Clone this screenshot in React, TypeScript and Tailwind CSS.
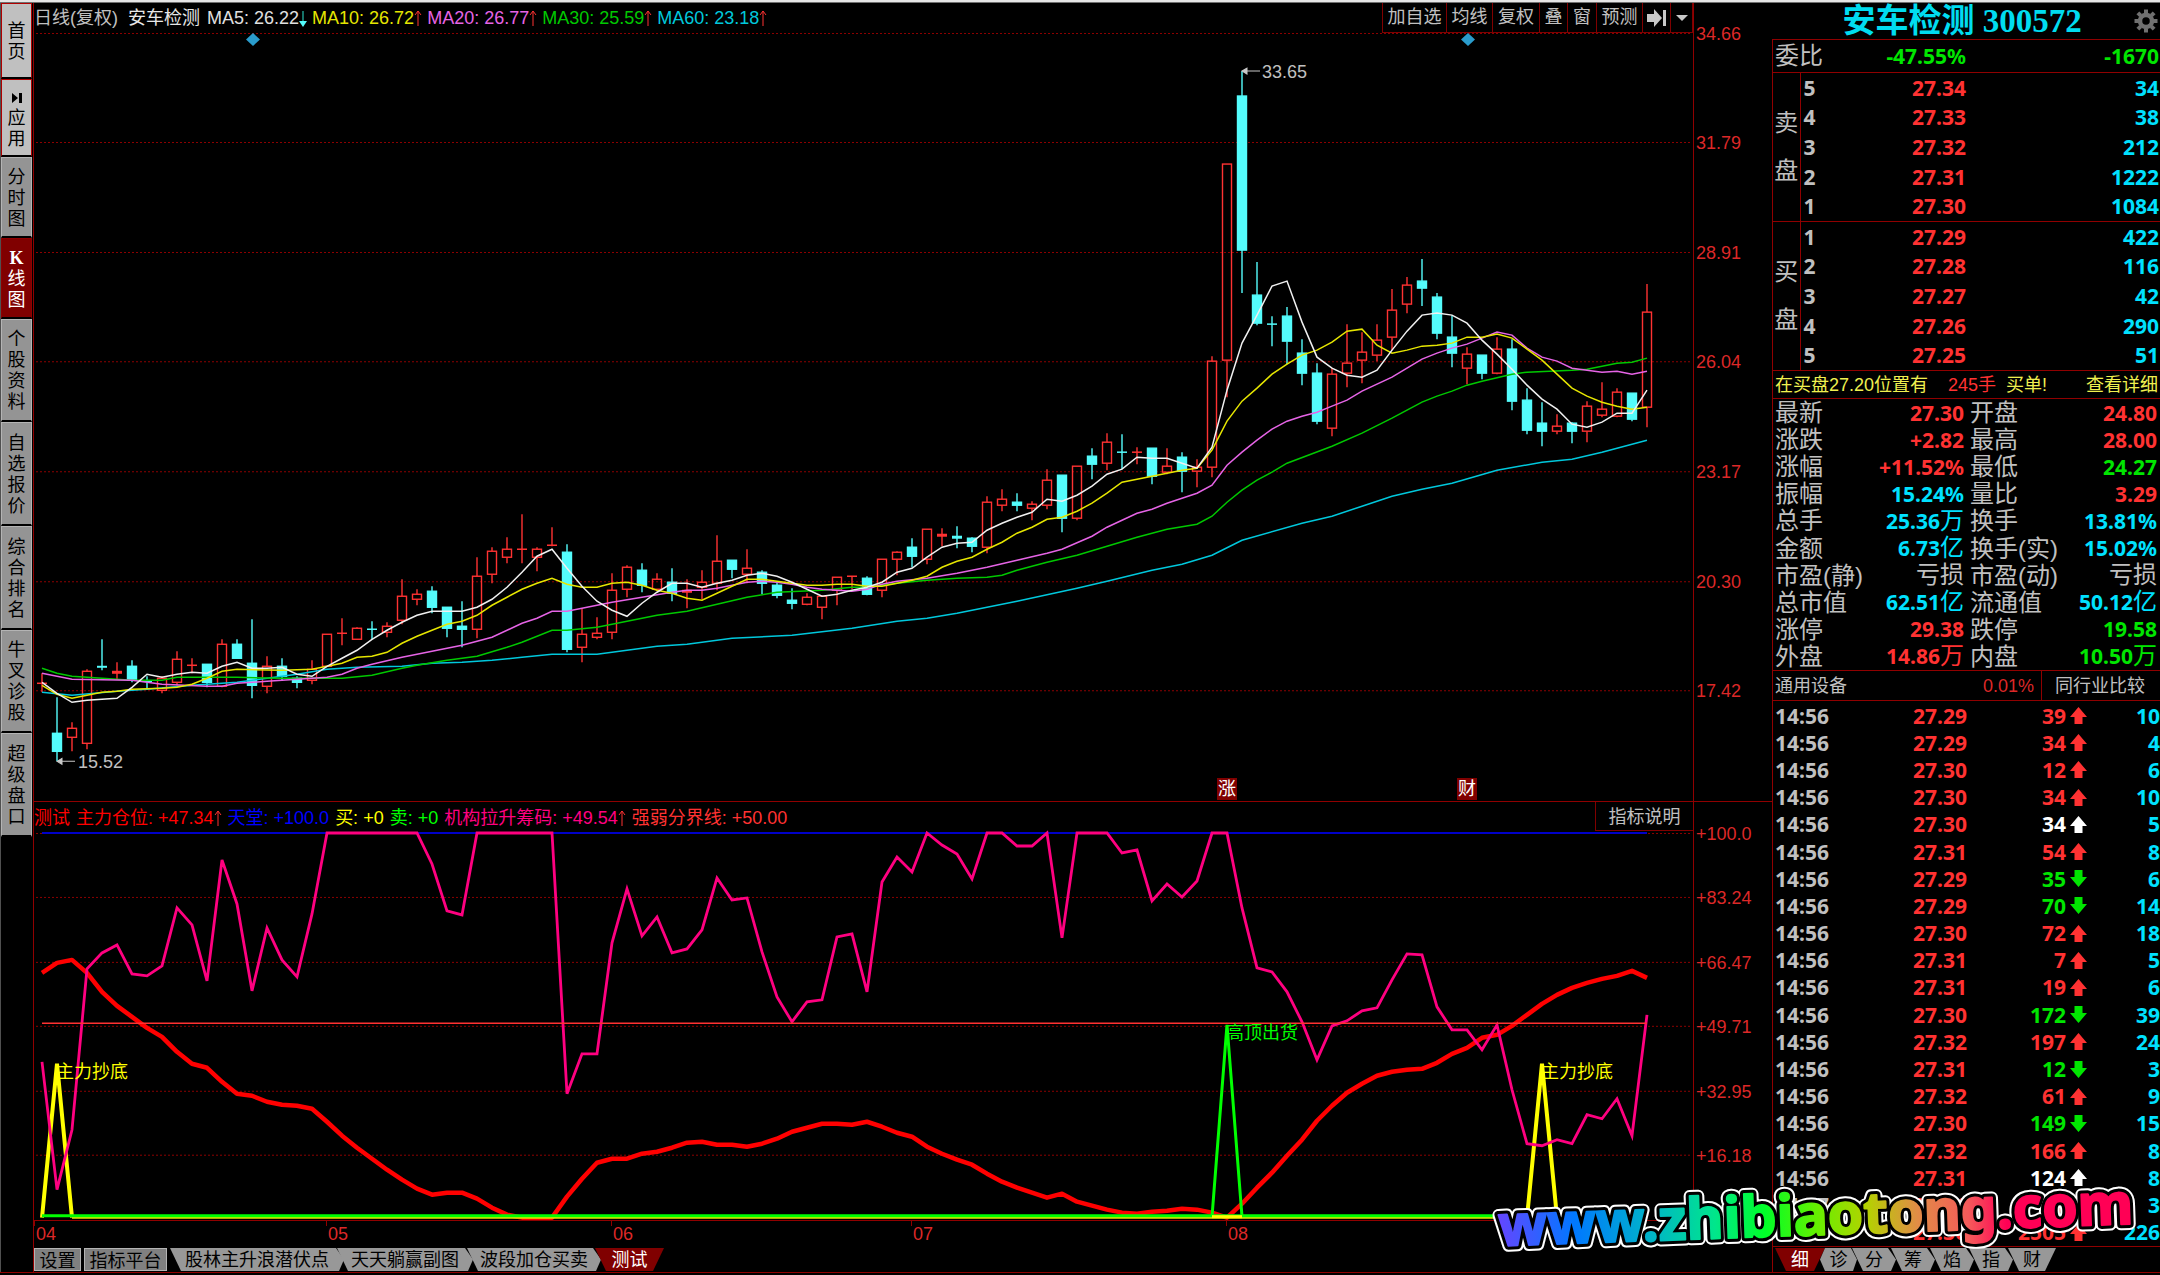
import React from 'react';

const X0 = 42;
const STEP = 15;
const cx = (i: number) => X0 + STEP * i;

type Kind = 'r' | 'c';
type Candle = [Kind, number, number, number, number];

// kind, high, body top, body bottom, low
const candles: Candle[] = [
  ['r', 673, 683, 683, 692], ['c', 697, 733, 751, 761], ['r', 722, 728, 737, 751], ['r', 669, 671, 743, 749],
  ['c', 639, 666, 667, 670], ['r', 662, 671, 673, 679], ['c', 660, 666, 680, 682], ['c', 676, 681, 681, 688],
  ['r', 676, 678, 690, 693], ['r', 651, 659, 682, 685], ['r', 658, 665, 665, 673], ['c', 664, 664, 682, 687],
  ['r', 639, 644, 686, 687], ['c', 639, 644, 658, 658], ['c', 619, 663, 685, 698], ['r', 656, 666, 686, 693],
  ['c', 658, 666, 676, 680], ['c', 676, 678, 682, 688], ['r', 660, 669, 680, 684], ['r', 634, 634, 666, 666],
  ['r', 618, 633, 633, 645], ['r', 627, 628, 639, 639], ['c', 621, 629, 629, 639], ['r', 622, 626, 632, 637],
  ['r', 579, 596, 620, 624], ['r', 589, 594, 599, 605], ['c', 586, 591, 607, 613], ['c', 607, 607, 628, 637],
  ['c', 601, 626, 629, 647], ['r', 557, 576, 629, 638], ['r', 547, 551, 574, 583], ['r', 537, 549, 557, 563],
  ['r', 514, 549, 549, 563], ['r', 547, 549, 557, 571], ['r', 527, 545, 545, 546], ['c', 544, 552, 649, 652],
  ['r', 608, 634, 647, 662], ['r', 617, 633, 637, 639], ['r', 573, 590, 632, 639], ['r', 565, 567, 589, 597],
  ['c', 563, 570, 585, 592], ['r', 573, 579, 589, 591], ['c', 568, 582, 593, 601], ['r', 579, 590, 592, 608],
  ['r', 570, 582, 587, 599], ['r', 535, 561, 583, 590], ['c', 560, 560, 569, 578], ['r', 549, 568, 574, 583],
  ['c', 570, 572, 583, 594], ['c', 582, 585, 595, 598], ['c', 588, 600, 603, 609], ['r', 593, 597, 604, 605],
  ['r', 595, 596, 607, 619], ['r', 577, 577, 590, 605], ['r', 576, 576, 576, 589], ['c', 576, 578, 594, 595],
  ['r', 559, 559, 590, 597], ['r', 551, 552, 559, 575], ['c', 538, 547, 556, 567], ['r', 529, 529, 559, 564],
  ['r', 528, 534, 536, 546], ['c', 526, 536, 538, 548], ['c', 537, 538, 546, 552], ['r', 496, 502, 547, 553],
  ['r', 489, 499, 505, 511], ['c', 493, 502, 505, 511], ['r', 501, 504, 508, 520], ['r', 469, 480, 505, 509],
  ['c', 475, 475, 518, 532], ['r', 466, 466, 518, 520], ['c', 448, 456, 464, 479], ['r', 433, 442, 463, 470],
  ['c', 434, 452, 452, 469], ['r', 447, 452, 452, 464], ['c', 448, 448, 476, 484], ['r', 448, 466, 472, 474],
  ['c', 452, 457, 471, 492], ['r', 459, 467, 471, 487], ['r', 356, 361, 467, 477], ['r', 164, 164, 360, 397],
  ['c', 71, 96, 250, 293], ['c', 262, 295, 323, 325], ['c', 316, 324, 324, 346], ['c', 307, 316, 341, 364],
  ['c', 339, 353, 373, 385], ['c', 363, 373, 421, 424], ['r', 368, 374, 428, 436], ['r', 324, 363, 373, 387],
  ['r', 332, 352, 360, 383], ['r', 324, 340, 355, 361], ['r', 289, 310, 337, 350], ['r', 277, 285, 304, 313],
  ['c', 259, 281, 288, 306], ['c', 293, 297, 333, 339], ['c', 315, 337, 353, 367], ['r', 347, 354, 368, 384],
  ['c', 355, 355, 373, 379], ['r', 337, 349, 373, 374], ['c', 339, 349, 401, 410], ['c', 388, 400, 430, 434],
  ['c', 402, 423, 431, 446], ['r', 414, 426, 431, 434], ['c', 422, 423, 431, 443], ['r', 401, 406, 431, 442],
  ['r', 382, 409, 415, 417], ['r', 388, 392, 416, 417], ['c', 393, 393, 419, 421], ['r', 284, 312, 407, 427],
];

type Pt = [number, number];
const path = (pts: Pt[]) => pts.map(([i, y]) => `${cx(i)},${y}`).join(' ');
const dense = (ys: number[]): Pt[] => ys.map((y, i) => [i, y]);

const ma5 = dense([
  682, 693, 702, 700, 699, 698, 687, 674, 677, 674, 672, 673, 666, 662, 668, 668, 667, 674, 676, 666, 658, 650, 639, 630,
  622, 615, 611, 611, 611, 607, 599, 587, 572, 556, 549, 568, 586, 601, 610, 616, 603, 592, 583, 583, 587, 583, 580, 575,
  573, 576, 582, 589, 596, 594, 590, 587, 582, 572, 568, 557, 547, 543, 542, 530, 523, 517, 512, 499, 501, 495, 486, 474,
  469, 457, 458, 458, 463, 468, 447, 390, 343, 315, 286, 281, 322, 357, 368, 375, 377, 370, 350, 331, 315, 313, 315, 323,
  340, 354, 369, 385, 399, 409, 424, 427, 422, 413, 413, 390,
]);
const ma10: Pt[] = [
  [0, 685], [1, 694], [2, 698], [3, 695], [4, 692], [5, 691], [6, 689], [8, 688], [9, 687], [10, 684], [11, 678], [12, 671],
  [13, 669], [16, 670], [18, 669], [19, 666], [20, 663], [21, 657], [22, 656], [23, 652], [24, 643], [25, 636], [26, 630],
  [27, 624], [28, 621], [29, 615], [30, 605], [31, 597], [32, 589], [33, 583], [34, 578], [35, 584], [36, 587], [37, 587],
  [38, 583], [39, 582], [40, 585], [41, 590], [42, 593], [43, 598], [44, 600], [45, 593], [46, 586], [47, 579], [48, 579],
  [49, 581], [50, 583], [51, 585], [52, 585], [53, 584], [54, 584], [55, 586], [56, 586], [57, 583], [58, 580], [59, 576],
  [60, 567], [61, 561], [62, 557], [63, 549], [64, 542], [65, 533], [66, 527], [67, 519], [68, 517], [69, 511], [70, 503],
  [71, 493], [72, 482], [73, 479], [74, 476], [75, 473], [76, 470], [77, 468], [78, 450], [79, 421], [80, 401], [81, 388],
  [82, 374], [83, 364], [84, 355], [85, 350], [86, 342], [87, 331], [88, 329], [89, 345], [90, 353], [91, 350], [92, 346],
  [93, 345], [94, 343], [95, 337], [96, 337], [97, 334], [98, 338], [99, 349], [100, 360], [101, 374], [102, 388],
  [103, 396], [104, 402], [105, 406], [106, 409], [107, 407],
];
const ma20: Pt[] = [
  [0, 673], [2, 679], [6, 680], [8, 684], [11, 686], [12, 686], [13, 683], [15, 681], [17, 679], [19, 677], [20, 674],
  [21, 668], [22, 664], [24, 657], [26, 651], [28, 645], [30, 637], [32, 623], [33, 618], [34, 611], [35, 611], [36, 608],
  [38, 602], [40, 597], [42, 592], [43, 590], [44, 590], [45, 588], [46, 585], [47, 582], [48, 581], [49, 582], [50, 584],
  [51, 587], [52, 589], [53, 590], [54, 591], [55, 589], [56, 584], [57, 581], [59, 578], [61, 573], [63, 567], [65, 560],
  [67, 553], [68, 549], [70, 536], [71, 527], [73, 513], [74, 509], [75, 503], [76, 498], [77, 493], [78, 485], [79, 465],
  [80, 452], [81, 440], [82, 429], [83, 421], [84, 416], [85, 412], [86, 406], [87, 400], [88, 391], [90, 377], [91, 368],
  [92, 359], [93, 353], [94, 348], [95, 344], [96, 338], [97, 332], [98, 335], [99, 348], [100, 357], [101, 361],
  [102, 368], [103, 370], [104, 372], [105, 371], [106, 374], [107, 371],
];
const ma30: Pt[] = [
  [0, 668], [1, 673], [2, 676], [4, 678], [6, 680], [8, 680], [9, 677], [13, 677], [16, 678], [20, 678], [22, 675],
  [24, 668], [25, 665], [27, 660], [29, 656], [31, 647], [32, 642], [34, 630], [35, 630], [37, 627], [39, 621], [41, 615],
  [43, 611], [45, 604], [47, 597], [49, 592], [52, 590], [54, 587], [55, 587], [57, 583], [59, 580], [61, 578], [63, 577],
  [64, 575], [65, 570], [67, 562], [69, 555], [71, 546], [73, 537], [75, 529], [77, 524], [78, 516], [79, 502], [80, 490],
  [81, 480], [82, 472], [83, 463], [86, 446], [88, 433], [90, 418], [91, 410], [92, 402], [93, 396], [94, 391], [95, 385],
  [96, 381], [98, 374], [99, 372], [102, 370], [103, 369], [104, 366], [105, 363], [106, 362], [107, 358],
];
const ma60: Pt[] = [
  [0, 692], [2, 695], [5, 691], [7, 689], [10, 685], [13, 682], [15, 678], [17, 674], [19, 669], [21, 667], [24, 666],
  [26, 663], [28, 662], [30, 660], [32, 657], [34, 654], [37, 654], [39, 650], [41, 646], [43, 644], [46, 638], [50, 635],
  [54, 628], [57, 621], [59, 618], [61, 613], [65, 601], [69, 588], [71, 581], [74, 570], [76, 564], [78, 555], [80, 540],
  [84, 523], [86, 516], [88, 506], [90, 496], [92, 489], [94, 483], [97, 470], [100, 462], [102, 459], [104, 452], [107, 440],
];

const chips: Pt[] = [
  [0, 1062], [1, 1190], [2, 1130], [3, 969], [4, 953], [5, 945], [6, 974], [7, 976], [8, 966], [9, 908], [10, 925],
  [11, 981], [12, 860], [13, 904], [14, 991], [15, 928], [16, 960], [17, 977], [18, 914], [19, 833], [25, 833], [26, 864],
  [27, 911], [28, 915], [29, 833], [34, 833], [35, 1094], [36, 1054], [37, 1054], [38, 943], [39, 889], [40, 936],
  [41, 917], [42, 953], [43, 949], [44, 930], [45, 878], [46, 900], [47, 898], [48, 952], [49, 997], [50, 1022],
  [51, 1002], [52, 1000], [53, 937], [54, 934], [55, 992], [56, 882], [57, 857], [58, 872], [59, 833], [60, 845],
  [61, 854], [62, 879], [63, 833], [64, 833], [65, 846], [66, 846], [67, 833], [68, 938], [69, 833], [71, 833], [72, 853],
  [73, 850], [74, 901], [75, 884], [76, 897], [77, 881], [78, 833], [79, 833], [80, 908], [81, 968], [82, 972], [83, 992],
  [84, 1022], [85, 1060], [86, 1026], [87, 1021], [88, 1011], [89, 1008], [90, 980], [91, 954], [92, 955], [93, 1007],
  [94, 1030], [95, 1030], [96, 1050], [97, 1025], [98, 1090], [99, 1144], [100, 1146], [101, 1140], [102, 1144],
  [103, 1115], [104, 1119], [105, 1099], [106, 1136], [107, 1015],
];
const position = dense([
  973, 963, 960, 973, 992, 1006, 1017, 1028, 1037, 1052, 1064, 1068, 1082, 1094, 1096, 1102, 1105, 1106, 1109, 1122, 1136,
  1148, 1159, 1170, 1180, 1189, 1195, 1193, 1193, 1199, 1208, 1215, 1218, 1218, 1218, 1197, 1179, 1163, 1159, 1159, 1154,
  1152, 1148, 1143, 1142, 1145, 1145, 1147, 1144, 1139, 1132, 1128, 1124, 1124, 1125, 1122, 1127, 1133, 1137, 1147, 1154,
  1160, 1165, 1174, 1182, 1188, 1193, 1198, 1194, 1202, 1206, 1210, 1213, 1214, 1212, 1211, 1209, 1210, 1213, 1218, 1204,
  1188, 1173, 1156, 1140, 1121, 1106, 1093, 1084, 1076, 1072, 1070, 1069, 1063, 1054, 1048, 1038, 1035, 1026, 1015, 1004,
  995, 988, 983, 979, 976, 971, 978,
]);

const F = '[font-family:"Liberation_Sans","Noto_Sans_CJK_SC",sans-serif]';
const NUM = '[font-family:"Noto_Sans","Noto_Sans_CJK_SC",sans-serif] font-bold text-[21px]';
const RED = 'text-[#ff3232]';
const GREEN = 'text-[#00e600]';
const CYAN = 'text-[#00e1ff]';
const GREY = 'text-[#c0c0c0]';
const MUTED_RED = 'text-[#dc2828]';

const sideTabs: { label: string; cls: string }[] = [
  { label: '首页', cls: 'h-[76px] bg-[#c0c0c0] text-black border-[#b00000]' },
  { label: '>应用', cls: 'h-[78px] bg-[#c0c0c0] text-black border-[#b00000]' },
  { label: '分时图', cls: 'h-[81px] bg-[#949494] text-black border-[#b4b4b4]' },
  { label: 'K线图', cls: 'h-[81px] bg-[#800000] text-white border-[#900000]' },
  { label: '个股资料', cls: 'h-[103px] bg-[#949494] text-black border-[#b4b4b4]' },
  { label: '自选报价', cls: 'h-[104px] bg-[#949494] text-black border-[#b4b4b4]' },
  { label: '综合排名', cls: 'h-[104px] bg-[#949494] text-black border-[#b4b4b4]' },
  { label: '牛叉诊股', cls: 'h-[103px] bg-[#949494] text-black border-[#b4b4b4]' },
  { label: '超级盘口', cls: 'h-[104px] bg-[#949494] text-black border-[#b4b4b4]' },
];

function SideNav() {
  return (
    <nav className="flex w-[33px] shrink-0 flex-col border-l border-[#505050] bg-black pr-px">
      {sideTabs.map((t) => (
        <div key={t.label} className="border-b-2 border-black">
          <button
            type="button"
            className={`-mb-0.5 box-border flex w-full flex-col items-center justify-center border border-b-2 border-b-black pt-0.5 text-[18px] leading-[21px] ${t.cls}`}
          >
            {t.label.split('').map((ch, i) =>
              ch === '>' ? (
                <svg key={i} viewBox="0 0 12 12" className="my-1 h-3 w-3" fill="#000">
                  <path d="M1 1 L7 6 L1 11 Z M8 1 H11 V11 H8 Z" />
                </svg>
              ) : ch === 'K' ? (
                <span key={i} className='[font-family:"Liberation_Serif",serif] font-bold'>K</span>
              ) : (
                <span key={i}>{ch}</span>
              ),
            )}
          </button>
        </div>
      ))}
    </nav>
  );
}

function ThinArrow({ down = false, color }: { down?: boolean; color: string }) {
  return (
    <svg viewBox="0 0 8 18" className="h-[18px] w-2 shrink-0" fill="none" stroke={color}>
      {down ? (
        <>
          <path d="M4 2 V14" stroke="#1e9a8c" strokeWidth="1.500" />
          <path d="M0 12 H8 L4 18 Z" fill={color} stroke="none" />
        </>
      ) : (
        <path d="M4 17 V2 M1 6 L4 2 L7 6" />
      )}
    </svg>
  );
}

const maItems = [
  { t: 'MA5: 26.22', c: 'text-[#e0e0e0]', down: true },
  { t: 'MA10: 26.72', c: 'text-[#e6e600]' },
  { t: 'MA20: 26.77', c: 'text-[#e664e6]' },
  { t: 'MA30: 25.59', c: 'text-[#00c800]' },
  { t: 'MA60: 23.18', c: 'text-[#00c8dc]' },
];

function ToolBar() {
  const b = 'h-full border-l border-[#800000] flex items-center justify-center';
  return (
    <div className={`flex h-[30px] shrink-0 border-b border-r border-[#800000] text-[18px] ${GREY}`}>
      <button type="button" className={`${b} w-[64px]`}>加自选</button>
      <button type="button" className={`${b} w-[46px]`}>均线</button>
      <button type="button" className={`${b} w-[47px]`}>复权</button>
      <button type="button" className={`${b} w-[28px]`}>叠</button>
      <button type="button" className={`${b} w-[29px]`}>窗</button>
      <button type="button" className={`${b} w-[46px]`}>预测</button>
      <button type="button" aria-label="下一只" className={`${b} w-[28px]`}>
        <svg viewBox="0 0 19 18" className="h-[18px] w-[19px]" fill="#c8c8c8">
          <path d="M0 5 H7 V0 L15 9 L7 18 V13 H0 Z M16 1 H19 V17 H16 Z" />
        </svg>
      </button>
      <button type="button" aria-label="更多" className={`${b} w-[22px]`}>
        <svg viewBox="0 0 12 6" className="h-1.5 w-3" fill="#c8c8c8"><path d="M0 0 H12 L6 6 Z" /></svg>
      </button>
    </div>
  );
}

type Box = { x: number; y: number; w: number; h: number };
const priceBox: Box = { x: 34, y: 33, w: 1659, h: 768 };
const indBox: Box = { x: 34, y: 832, w: 1659, h: 388 };

function at(box: Box, x: number, y: number): React.CSSProperties {
  return { left: `${((x - box.x) / box.w) * 100}%`, top: `${((y - box.y) / box.h) * 100}%` };
}

function Grid({ ys }: { ys: number[] }) {
  return (
    <g stroke="#8c0000" strokeWidth="1" strokeDasharray="2 2">
      {ys.map((y) => <line key={y} x1="36" x2="1692" y1={y + 0.5} y2={y + 0.5} />)}
    </g>
  );
}

const priceGrid = [33, 142, 252, 361, 471, 581, 690];
const priceLabels = ['34.66', '31.79', '28.91', '26.04', '23.17', '20.30', '17.42'];

function Axis({ box, ys, labels }: { box: Box; ys: number[]; labels: string[] }) {
  return (
    <div className="relative flex-1">
      {ys.map((y, i) => (
        <span key={y} className={`absolute left-[2px] -translate-y-1/2 text-[18px] leading-[22px] ${MUTED_RED}`} style={{ top: `${((y + 1 - box.y) / box.h) * 100}%` }}>
          {labels[i]}
        </span>
      ))}
    </div>
  );
}

function PriceChart() {
  return (
    <section className="flex min-h-0 flex-[799] border-b border-[#900000]">
      <div className="flex min-w-0 flex-1 flex-col">
        <header className="flex h-[30px] items-start justify-between whitespace-nowrap text-[18px]">
          <div className="flex h-[22px] items-center pt-[8px]">
            <span className={`w-[94px] ${GREY}`}>日线(复权)</span>
            <span className="mr-[7px] text-[#e8e8e8]">安车检测</span>
            {maItems.map((m) => (
              <span key={m.t} className={`mr-[5px] flex items-center ${m.c}`}>
                {m.t}
                <ThinArrow down={m.down} color={m.down ? '#54fcfc' : '#ff3232'} />
              </span>
            ))}
          </div>
          <ToolBar />
        </header>
        <div className="relative min-h-0 flex-1">
          <svg viewBox="34 33 1659 768" preserveAspectRatio="none" className="absolute inset-0 h-full w-full">
            <Grid ys={priceGrid} />
            {candles.map(([k, h, t, b, l], i) => {
              const x = cx(i);
              const col = k === 'r' ? '#ff3232' : '#54fcfc';
              const flat = b - t < 3;
              return (
                <g key={i} stroke={col} strokeWidth="1.4" fill="none">
                  {flat ? (
                    <>
                      <line x1={x} x2={x} y1={h} y2={l} />
                      <line x1={x - 5} x2={x + 5} y1={(t + b) / 2} y2={(t + b) / 2} strokeWidth={Math.max(1.5, b - t + 1)} />
                    </>
                  ) : (
                    <>
                      <line x1={x} x2={x} y1={h} y2={t} />
                      <line x1={x} x2={x} y1={b} y2={l} />
                      <rect x={x - 4.5} y={t} width="9" height={b - t} fill={k === 'c' ? col : 'none'} />
                    </>
                  )}
                </g>
              );
            })}
            <g fill="none" strokeWidth="1.5">
              <polyline points={path(ma60)} stroke="#00c8dc" />
              <polyline points={path(ma30)} stroke="#00c800" />
              <polyline points={path(ma20)} stroke="#e664e6" />
              <polyline points={path(ma10)} stroke="#e6e600" />
              <polyline points={path(ma5)} stroke="#f0f0f0" />
            </g>
            <g fill="#2a9ccc">
              <path d="M253 33 L260 39.500 L253 46 L246 39.500 Z" />
              <path d="M1468 33 L1475 39.500 L1468 46 L1461 39.500 Z" />
            </g>
            <g fill="#c8c8c8" stroke="#c8c8c8">
              <path d="M1242 71 H1260 M1242 71 L1247 68 V74 Z" />
              <path d="M57 761 H75 M57 761 L62 758 V764 Z" />
            </g>
          </svg>
          <span className={`absolute -translate-y-1/2 text-[18px] leading-[22px] ${GREY}`} style={at(priceBox, 1262, 72)}>33.65</span>
          <span className={`absolute -translate-y-1/2 text-[18px] leading-[22px] ${GREY}`} style={at(priceBox, 78, 762)}>15.52</span>
          <span className="absolute w-5 bg-[#800000] text-center text-[18px] leading-[22px] text-white" style={at(priceBox, 1217, 778)}>涨</span>
          <span className="absolute w-5 bg-[#800000] text-center text-[18px] leading-[22px] text-white" style={at(priceBox, 1457, 778)}>财</span>
        </div>
      </div>
      <div className="flex w-[79px] shrink-0 flex-col border-l border-[#900000]">
        <div className="h-[30px] shrink-0" />
        <Axis box={priceBox} ys={priceGrid} labels={priceLabels} />
      </div>
    </section>
  );
}

const indGrid = [833, 897, 962, 1026, 1091, 1155];
const indLabels = ['+100.0', '+83.24', '+66.47', '+49.71', '+32.95', '+16.18'];

function IndicatorChart() {
  return (
    <section className="flex min-h-0 flex-[418]">
      <div className="flex min-w-0 flex-1 flex-col">
        <header className="flex h-[30px] items-start justify-between whitespace-nowrap text-[18px] leading-8">
          <div className="flex items-center gap-[6px]">
            <span className="text-[#ff0000]">测试</span>
            <span className="flex items-center text-[#ff0000]">主力仓位: +47.34<ThinArrow color="#ff3232" /></span>
            <span className="text-[#0000ff]">天堂: +100.0</span>
            <span className="text-[#ffff00]">买: +0</span>
            <span className="text-[#00ff00]">卖: +0</span>
            <span className="flex items-center text-[#ff0080]">机构拉升筹码: +49.54<ThinArrow color="#ff3232" /></span>
            <span className="text-[#ff3232]">强弱分界线: +50.00</span>
          </div>
          <button type="button" className={`h-[29px] w-[98px] border-b border-l border-[#800000] text-[18px] leading-[30px] ${GREY}`}>指标说明</button>
        </header>
        <div className="relative min-h-0 flex-1">
          <svg viewBox="34 832 1659 388" preserveAspectRatio="none" className="absolute inset-0 h-full w-full overflow-visible">
            <Grid ys={indGrid} />
            <g fill="none">
              <line x1={cx(0)} x2={cx(107)} y1="833" y2="833" stroke="#0000c8" strokeWidth="2" />
              <polyline points={path(position)} stroke="#ff0000" strokeWidth="4.500" strokeLinejoin="round" />
              <polyline points={path([[0, 1218], [1, 1064], [2, 1218]])} stroke="#ffff00" strokeWidth="4" />
              <polyline points={path([[99, 1218], [100, 1064], [101, 1218]])} stroke="#ffff00" strokeWidth="4" />
              <line x1={cx(2)} x2={cx(107)} y1="1218" y2="1218" stroke="#e6e600" strokeWidth="2" />
              <line x1={cx(0)} x2={cx(107)} y1="1216" y2="1216" stroke="#00ff00" strokeWidth="3" />
              <polyline points={path([[78, 1217], [79, 1025], [80, 1217]])} stroke="#00ff00" strokeWidth="3" />
              <line x1={cx(78)} x2={cx(80)} y1="1217" y2="1217" stroke="#ffff00" strokeWidth="3" />
              <polyline points={path(chips)} stroke="#ff0080" strokeWidth="2.800" />
              <line x1={cx(0)} x2={cx(107)} y1="1023.500" y2="1023.500" stroke="#ff3232" strokeWidth="1.500" />
            </g>
          </svg>
          <span className="absolute -translate-y-1/2 text-[18px] leading-[22px] text-[#ffff00]" style={at(indBox, 56, 1072)}>主力抄底</span>
          <span className="absolute -translate-y-1/2 text-[18px] leading-[22px] text-[#00ff00]" style={at(indBox, 1226, 1033)}>高顶出货</span>
          <span className="absolute -translate-y-1/2 text-[18px] leading-[22px] text-[#ffff00]" style={at(indBox, 1541, 1072)}>主力抄底</span>
        </div>
      </div>
      <div className="flex w-[79px] shrink-0 flex-col border-l border-[#900000]">
        <div className="h-[30px] shrink-0" />
        <Axis box={indBox} ys={indGrid} labels={indLabels} />
      </div>
    </section>
  );
}

const months: [string, number][] = [['04', 34], ['05', 326], ['06', 611], ['07', 911], ['08', 1226]];

function MonthAxis() {
  return (
    <div className="relative h-7 shrink-0 border-t border-[#900000]">
      {months.map(([m, x]) => (
        <span
          key={m}
          className={`absolute top-0 flex items-start gap-px text-[18px] leading-[26px] ${MUTED_RED}`}
          style={{ left: `${((x - 34) / 1738) * 100}%` }}
        >
          <span className="h-[5px] w-px bg-[#900000]" />
          {m}
        </span>
      ))}
    </div>
  );
}

const slantTab = '[clip-path:polygon(0_0,calc(100%-8px)_0,100%_50%,calc(100%-5px)_100%,11px_100%)]';
const endTab = '[clip-path:polygon(0_0,100%_0,calc(100%-11px)_100%,11px_100%)]';

function BottomTabs() {
  const t = 'h-[23px] text-[18px] leading-[25px] text-black';
  return (
    <div className="flex h-6 shrink-0 items-start whitespace-nowrap">
      <button type="button" className={`${t} mr-[3px] w-[47px] border border-[#b4b4b4] bg-[#808080] leading-[23px]`}>设置</button>
      <button type="button" className={`${t} mr-[3px] w-[83px] border border-[#b4b4b4] bg-[#808080] leading-[23px]`}>指标平台</button>
      <button type="button" className={`${t} ${slantTab} w-[174px] bg-[#989898]`}>股林主升浪潜伏点</button>
      <button type="button" className={`${t} ${slantTab} -ml-[7px] w-[136px] bg-[#989898]`}>天天躺赢副图</button>
      <button type="button" className={`${t} ${slantTab} -ml-[6px] w-[134px] bg-[#989898]`}>波段加仓买卖</button>
      <button type="button" className={`h-[23px] text-[18px] leading-[25px] text-white ${endTab} -ml-[6px] w-[69px] bg-[#800000]`}>测试</button>
    </div>
  );
}

const book: [string, string, string][] = [
  ['5', '27.34', '34'], ['4', '27.33', '38'], ['3', '27.32', '212'], ['2', '27.31', '1222'], ['1', '27.30', '1084'],
  ['1', '27.29', '422'], ['2', '27.28', '116'], ['3', '27.27', '42'], ['4', '27.26', '290'], ['5', '27.25', '51'],
];

function OrderBook() {
  return (
    <table className="h-[298px] w-full table-fixed border-collapse border-t border-[#900000]">
      <colgroup>
        <col className="w-[27px]" />
        <col className="w-[30px]" />
        <col className="w-[136px]" />
        <col />
      </colgroup>
      <tbody>
        {book.map(([lv, p, v], i) => (
          <tr key={i} className={i === 5 ? 'border-t border-[#900000]' : ''}>
            {i % 5 === 0 && (
              <th scope="rowgroup" rowSpan={5} className={`border-r border-[#900000] text-[24px] font-normal leading-[48px] ${GREY}`}>
                <span className="block">{i === 0 ? '卖' : '买'}</span>
                <span className="block">盘</span>
              </th>
            )}
            <td className={`${NUM} pl-[3px] leading-[28px] ${GREY}`}>{lv}</td>
            <td className={`${NUM} text-right leading-[28px] ${RED}`}>{p}</td>
            <td className={`${NUM} pr-px text-right leading-[28px] ${CYAN}`}>{v}</td>
          </tr>
        ))}
      </tbody>
    </table>
  );
}

type Cell = [label: string, value: string, unit: string, cls: string];
const stats: [Cell, Cell][] = [
  [['最新', '27.30', '', RED], ['开盘', '24.80', '', RED]],
  [['涨跌', '+2.82', '', RED], ['最高', '28.00', '', RED]],
  [['涨幅', '+11.52%', '', RED], ['最低', '24.27', '', GREEN]],
  [['振幅', '15.24%', '', CYAN], ['量比', '3.29', '', RED]],
  [['总手', '25.36', '万', CYAN], ['换手', '13.81%', '', CYAN]],
  [['金额', '6.73', '亿', CYAN], ['换手(实)', '15.02%', '', CYAN]],
  [['市盈(静)', '', '亏损', GREY], ['市盈(动)', '', '亏损', GREY]],
  [['总市值', '62.51', '亿', CYAN], ['流通值', '50.12', '亿', CYAN]],
  [['涨停', '29.38', '', RED], ['跌停', '19.58', '', GREEN]],
  [['外盘', '14.86', '万', RED], ['内盘', '10.50', '万', GREEN]],
];

function StatCells({ cell, right }: { cell: Cell; right?: boolean }) {
  const [label, value, unit, cls] = cell;
  return (
    <>
      <th scope="row" className={`h-[27px] p-0 text-left font-normal ${GREY}`}>
        <span className={`block h-[27px] overflow-visible text-[24px] leading-[28px] ${right ? 'pl-[3px]' : 'pl-[2px]'}`}>{label}</span>
      </th>
      <td className="h-[27px] p-0">
        <span className={`flex h-[27px] items-center justify-end pr-[3px] ${cls}`}>
          {value && <span className={`${NUM} leading-[28px]`}>{value}</span>}
          {unit && <span className="text-[24px] leading-[28px]">{unit}</span>}
        </span>
      </td>
    </>
  );
}

const ticks: [string, string, string, 'u' | 'd' | 'w', string][] = [
  ['14:56', '27.29', '39', 'u', '10'], ['14:56', '27.29', '34', 'u', '4'], ['14:56', '27.30', '12', 'u', '6'],
  ['14:56', '27.30', '34', 'u', '10'], ['14:56', '27.30', '34', 'w', '5'], ['14:56', '27.31', '54', 'u', '8'],
  ['14:56', '27.29', '35', 'd', '6'], ['14:56', '27.29', '70', 'd', '14'], ['14:56', '27.30', '72', 'u', '18'],
  ['14:56', '27.31', '7', 'u', '5'], ['14:56', '27.31', '19', 'u', '6'], ['14:56', '27.30', '172', 'd', '39'],
  ['14:56', '27.32', '197', 'u', '24'], ['14:56', '27.31', '12', 'd', '3'], ['14:56', '27.32', '61', 'u', '9'],
  ['14:56', '27.30', '149', 'd', '15'], ['14:56', '27.32', '166', 'u', '8'], ['14:56', '27.31', '124', 'w', '8'],
  ['14:57', '27.31', '27', 'u', '3'], ['15:00', '27.30', '2505', 'u', '226'],
];

function Ticks() {
  return (
    <div className="grid min-h-0 flex-1 border-t border-[#900000] pt-px">
      <table className="h-full w-full table-fixed border-collapse">
        <colgroup>
          <col className="w-[80px]" />
          <col className="w-[114px]" />
          <col className="w-[99px]" />
          <col className="w-[24px]" />
          <col />
        </colgroup>
        <tbody>
          {ticks.map(([t, p, v, d, n], i) => {
            const c = d === 'u' ? RED : d === 'd' ? GREEN : 'text-white';
            return (
              <tr key={i}>
                <td className={`${NUM} py-0 pl-[2px] leading-[26px] ${GREY}`}>{t}</td>
                <td className={`${NUM} py-0 text-right leading-[26px] ${RED}`}>{p}</td>
                <td className={`${NUM} py-0 text-right leading-[26px] ${c}`}>{v}</td>
                <td className={`py-0 pl-1 ${c}`}>
                  <svg viewBox="0 0 17 17" className="h-[17px] w-[17px]" fill="currentColor">
                    <path d={d === 'd' ? 'M4.500 0 H12.500 V7 H17 L8.500 17 L0 7 H4.500 Z' : 'M4.500 17 H12.500 V10 H17 L8.500 0 L0 10 H4.500 Z'} />
                  </svg>
                </td>
                <td className={`${NUM} py-0 text-right leading-[26px] ${CYAN}`}>{n}</td>
              </tr>
            );
          })}
        </tbody>
      </table>
    </div>
  );
}

function QuoteTabs() {
  const t = 'h-[23px] text-[18px] leading-[25px] text-black bg-[#989898] -ml-[5px]';
  return (
    <div className="flex h-[26px] shrink-0 border-t border-[#900000] pl-[2px] pt-px">
      <button type="button" className={`h-[23px] w-[50px] bg-[#800000] text-[18px] leading-[25px] text-white ${endTab}`}>细</button>
      <button type="button" className={`${t} w-[37px] [clip-path:polygon(5px_0,calc(100%-6px)_0,100%_50%,calc(100%-4px)_100%,5px_100%,0_50%)]`}>诊</button>
      {['分', '筹', '焰', '指'].map((x) => (
        <button key={x} type="button" className={`${t} w-[44px] ${slantTab}`}>{x}</button>
      ))}
      <button type="button" className={`${t} w-[48px] ${endTab}`}>财</button>
    </div>
  );
}

function GearIcon() {
  return (
    <svg viewBox="0 0 24 24" className="h-6 w-6" fill="none" stroke="#707070">
      <circle cx="12" cy="12" r="6" strokeWidth="4.500" />
      <g strokeWidth="4">
        {[0, 45, 90, 135, 180, 225, 270, 315].map((a) => (
          <line key={a} x1="12" y1="0.500" x2="12" y2="4.500" transform={`rotate(${a} 12 12)`} />
        ))}
      </g>
    </svg>
  );
}

function QuotePanel() {
  return (
    <aside className="flex w-[388px] shrink-0 flex-col whitespace-nowrap">
      <div className="relative flex h-9 shrink-0 items-center justify-center pr-[8px]">
        <h1 className={`[font-family:"Liberation_Serif","Noto_Sans_CJK_SC",serif] text-[33px] font-bold leading-9 text-[#00dcf0]`}>安车检测 300572</h1>
        <button type="button" aria-label="设置" className="absolute right-[2px] top-[6px]"><GearIcon /></button>
      </div>
      <div className="flex min-h-0 flex-1 flex-col border-l border-t border-[#900000]">
        <div className="flex h-8 shrink-0 items-center pl-[2px]">
          <span className={`w-[88px] text-[24px] leading-8 ${GREY}`}>委比</span>
          <span className={`${NUM} w-[103px] text-right leading-8 ${GREEN}`}>-47.55%</span>
          <span className={`${NUM} flex-1 pr-px text-right leading-8 ${GREEN}`}>-1670</span>
        </div>
        <OrderBook />
        <div className="flex h-7 shrink-0 items-center border-t border-[#900000] pl-[2px] text-[18px] leading-7 text-[#f0f050]">
          <span className="w-[173px]">在买盘27.20位置有</span>
          <span className={`w-[58px] ${RED}`}>245手</span>
          <span>买单!</span>
          <a href="#detail" className="ml-auto pr-[2px]">查看详细</a>
        </div>
        <table className="h-[272px] w-full table-fixed border-collapse border-t border-[#900000]">
          <colgroup>
            <col className="w-[97px]" />
            <col className="w-[97px]" />
            <col className="w-[97px]" />
            <col />
          </colgroup>
          <tbody>
            {stats.map(([a, b]) => (
              <tr key={a[0]}>
                <StatCells cell={a} />
                <StatCells cell={b} right />
              </tr>
            ))}
          </tbody>
        </table>
        <div className={`flex h-[30px] shrink-0 border-t border-[#900000] text-[18px] leading-[31px] ${GREY}`}>
          <span className="flex-1 pl-[2px]">通用设备</span>
          <span className={`pr-[7px] ${MUTED_RED}`}>0.01%</span>
          <a href="#industry" className="w-[119px] border-l border-[#900000] pl-[13px]">同行业比较</a>
        </div>
        <Ticks />
        <QuoteTabs />
      </div>
    </aside>
  );
}

function SiteMark() {
  const common = {
    x: 29,
    y: 91,
    fontSize: 57,
    fontWeight: 700,
    fontFamily: 'Noto Sans, sans-serif',
    strokeLinejoin: 'round' as const,
    transform: 'rotate(-2 29 91)',
  };
  return (
    <svg viewBox="0 0 690 120" className="pointer-events-none absolute bottom-0 right-0 h-[120px] w-[690px]" aria-label="www.zhibiaotong.com">
      <defs>
        <linearGradient id="rainbow" x1="0" x2="1" y1="0" y2="0">
          <stop offset="0" stopColor="#6446ff" />
          <stop offset="0.12" stopColor="#0078ff" />
          <stop offset="0.24" stopColor="#00b4c8" />
          <stop offset="0.34" stopColor="#00e68c" />
          <stop offset="0.42" stopColor="#00ff28" />
          <stop offset="0.5" stopColor="#64f000" />
          <stop offset="0.58" stopColor="#b4d200" />
          <stop offset="0.66" stopColor="#e18c46" />
          <stop offset="0.74" stopColor="#f55a5a" />
          <stop offset="0.8" stopColor="#ff0055" />
          <stop offset="1" stopColor="#ff0055" />
        </linearGradient>
      </defs>
      <g aria-hidden="true">
        <text {...common} fill="#ffffff" stroke="#ffffff" strokeWidth="12">www.zhibiaotong.com</text>
        <text {...common} fill="#000000" stroke="#000000" strokeWidth="8">www.zhibiaotong.com</text>
      </g>
      <text {...common} fill="url(#rainbow)" stroke="url(#rainbow)" strokeWidth="2">www.zhibiaotong.com</text>
    </svg>
  );
}

export default function App() {
  return (
    <div className={`relative flex h-screen flex-col overflow-hidden bg-black ${F}`}>
      <div className="h-[3px] shrink-0 border-b border-[#707070] bg-[#e6e6e6]" />
      <div className="flex min-h-0 flex-1">
        <SideNav />
        <main className="flex min-w-0 flex-1 flex-col border-l border-[#900000]">
          <PriceChart />
          <IndicatorChart />
          <MonthAxis />
          <BottomTabs />
        </main>
        <QuotePanel />
      </div>
      <div className="h-[3px] shrink-0 border-t border-[#900000]" />
      <SiteMark />
    </div>
  );
}
